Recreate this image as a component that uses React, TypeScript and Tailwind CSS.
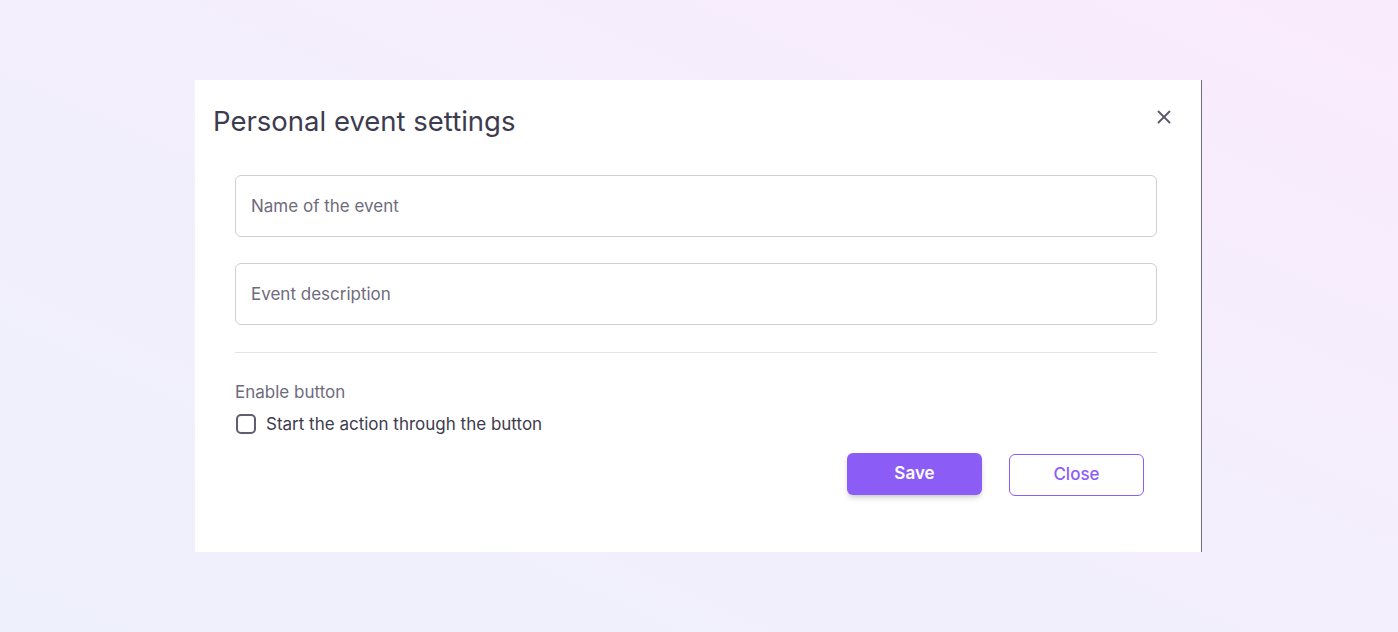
import { X } from "lucide-react";

export default function App() {
  return (
    <div className="flex h-screen w-full items-center justify-center bg-linear-to-tr from-[#eef0fc] via-[#f3effc] to-[#faebfc] pr-px font-['Inter','Noto_Sans',sans-serif]">
      <div className="h-[472px] w-[1007px] border-r border-[#6f6b80] bg-white">
        {/* Header */}
        <div className="flex items-start justify-between pl-[18px] pr-[26px] pt-[23px]">
          <h2 className="text-[27.5px] leading-9 font-normal text-[#3d3b4e]">
            Personal event settings
          </h2>
          <button className="mt-[3px] text-[#5a586b]" aria-label="Close dialog">
            <X className="size-[22px]" strokeWidth={2} />
          </button>
        </div>

        {/* Body */}
        <div className="ml-[40px] mt-[36px] w-[922px]">
          <input
            className="h-[62px] w-full rounded-md border border-[#cfcfd4] px-[15px] text-[17px] text-[#3d3b4e] outline-none placeholder:text-[#6e6c7c]"
            placeholder="Name of the event"
          />
          <input
            className="mt-[26px] h-[62px] w-full rounded-md border border-[#cfcfd4] px-[15px] text-[17px] text-[#3d3b4e] outline-none placeholder:text-[#6e6c7c]"
            placeholder="Event description"
          />
          <div className="mt-[27px] h-px w-full bg-[#e4e4e7]" />

          <p className="mt-[27px] text-[17px] leading-6 text-[#6e6c7c]">Enable button</p>
          <label className="mt-2 flex items-center gap-[10px] text-[17px] leading-6 text-[#3d3b4e]">
            <span className="ml-px size-[20px] rounded-[5px] border-2 border-[#5f5d70]" />
            Start the action through the button
          </label>

          {/* Actions */}
          <div className="mt-[17px] flex justify-end gap-[27px] pr-[13px]">
            <button className="h-[42px] w-[135px] rounded-md bg-[#8b5cf6] text-[17px] font-semibold text-white shadow-md shadow-black/15">
              Save
            </button>
            <button className="mt-px h-[42px] w-[135px] rounded-md border border-[#8b5cf6] text-[17px] font-medium text-[#8b5cf6]">
              Close
            </button>
          </div>
        </div>
      </div>
    </div>
  );
}
